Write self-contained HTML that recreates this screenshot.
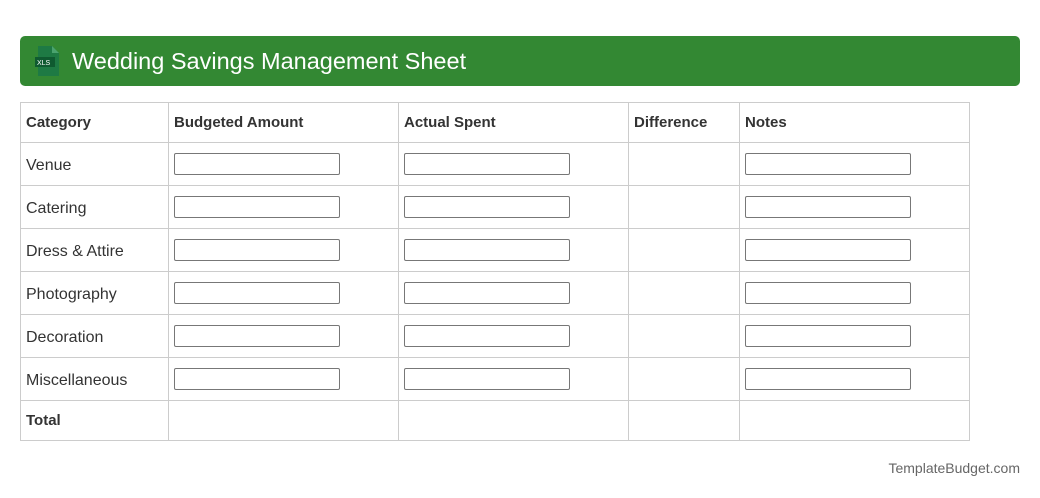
<!DOCTYPE html>
<html><head><meta charset="utf-8"><style>
*{box-sizing:border-box;margin:0;padding:0}
body{width:1040px;height:498px;background:#fff;font-family:"Liberation Sans",Arial,sans-serif;color:#333;position:relative;overflow:hidden}
.hdr{position:absolute;left:20px;top:36px;width:1000px;height:50px;background:#338833;border-radius:5px;color:#fff;font-size:23.5px;line-height:50px;padding-left:52px}
.hdr svg{position:absolute;left:15px;top:10px}
table{position:absolute;left:20px;top:102px;border-collapse:collapse;table-layout:fixed;width:949px}
td{border:1px solid #ccc;font-size:16px;padding:0 5px;vertical-align:middle}
tr.h td,tr.t td{height:40px;font-weight:bold;font-size:15px}
tr.b td{height:43px}
tr.b td:first-child{padding-top:3px}
.in{width:166px;height:22px;border:1px solid #777;border-radius:2px;background:#fff}
.ft{position:absolute;right:20px;top:460px;font-size:14px;color:#666}
</style></head><body>
<div class="hdr"><svg width="26" height="30" viewBox="0 0 26 30"><path d="M3 0h14l7 7v23H3z" fill="#1e7a44"/><path d="M17 0v7h7z" fill="#4aa36e"/><rect x="0" y="11" width="20" height="10" fill="#0f5a30"/><text x="2" y="19" font-size="7" fill="#fff" font-family="Liberation Sans">XLS</text></svg>Wedding Savings Management Sheet</div>
<table>
<colgroup><col style="width:148px"><col style="width:230px"><col style="width:230px"><col style="width:111px"><col style="width:230px"></colgroup>
<tr class="h"><td>Category</td><td>Budgeted Amount</td><td>Actual Spent</td><td>Difference</td><td>Notes</td></tr>
<tr class="b"><td>Venue</td><td><div class="in"></div></td><td><div class="in"></div></td><td></td><td><div class="in"></div></td></tr>
<tr class="b"><td>Catering</td><td><div class="in"></div></td><td><div class="in"></div></td><td></td><td><div class="in"></div></td></tr>
<tr class="b"><td>Dress &amp; Attire</td><td><div class="in"></div></td><td><div class="in"></div></td><td></td><td><div class="in"></div></td></tr>
<tr class="b"><td>Photography</td><td><div class="in"></div></td><td><div class="in"></div></td><td></td><td><div class="in"></div></td></tr>
<tr class="b"><td>Decoration</td><td><div class="in"></div></td><td><div class="in"></div></td><td></td><td><div class="in"></div></td></tr>
<tr class="b"><td>Miscellaneous</td><td><div class="in"></div></td><td><div class="in"></div></td><td></td><td><div class="in"></div></td></tr>
<tr class="t"><td>Total</td><td></td><td></td><td></td><td></td></tr>
</table>
<div class="ft">TemplateBudget.com</div>
</body></html>
